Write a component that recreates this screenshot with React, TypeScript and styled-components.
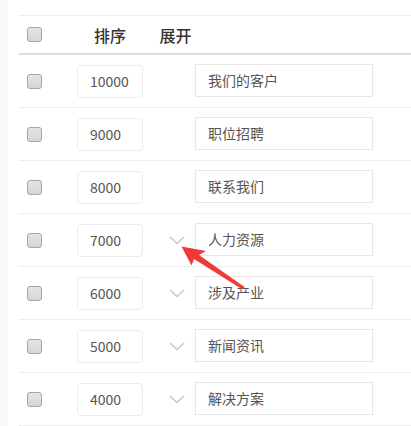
import styled, { createGlobalStyle } from 'styled-components';

const GlobalStyle = createGlobalStyle`
  html, body {
    margin: 0;
    padding: 0;
    background: #f8f8f8;
  }
  body {
    font-family: "Noto Sans CJK SC", "Noto Sans", sans-serif;
    color: #555;
  }
`;

interface Item {
  sort: number,
  name: string,
  expandable: boolean
}

const items: Array<Item> = [
  { sort: 10000, name: '我们的客户', expandable: false },
  { sort: 9000, name: '职位招聘', expandable: false },
  { sort: 8000, name: '联系我们', expandable: false },
  { sort: 7000, name: '人力资源', expandable: true },
  { sort: 6000, name: '涉及产业', expandable: true },
  { sort: 5000, name: '新闻资讯', expandable: true },
  { sort: 4000, name: '解决方案', expandable: true },
];

function Chevron() {
  return (
    <ChevronSvg width='16' height='9' viewBox='0 0 16 9'>
      <polyline points='1,1 8,7.5 15,1' fill='none' stroke='#c8c8c8' strokeWidth='1.6' />
    </ChevronSvg>
  );
}

function RedArrow() {
  return (
    <ArrowSvg width='411' height='426' viewBox='0 0 411 426'>
      <polygon
        points='181.5,246.5 206,251 199,255 244.5,287 242.5,289.5 194,259 191.5,265.5'
        fill='#f03a3a'
      />
    </ArrowSvg>
  );
}

export default function App() {
  return (
    <>
      <GlobalStyle />
      <Page>
        <Table>
          <HeaderRow>
            <CheckCell><Check /></CheckCell>
            <HeadTitle>排序</HeadTitle>
            <HeadTitle $shift={13}>展开</HeadTitle>
            <div />
          </HeaderRow>
          {items.map(item => (
            <Row key={item.sort}>
              <CheckCell><Check /></CheckCell>
              <SortInput>{item.sort}</SortInput>
              <ExpandCell>{item.expandable && <Chevron />}</ExpandCell>
              <NameInput>{item.name}</NameInput>
            </Row>
          ))}
        </Table>
        <RedArrow />
      </Page>
    </>
  );
}

const Page = styled.div`
  position: relative;
  margin-left: 8px;
  min-height: 426px;
  background: #fff;
  padding: 15px 0 0 11px;
  box-sizing: border-box;
  overflow: hidden;
`;

const Table = styled.div`
  display: flex;
  flex-direction: column;
  border-top: 1px solid #eeeeee;
`;

const GridRow = styled.div`
  display: grid;
  grid-template-columns: 58px 66px 52px 1fr;
  align-items: center;
`;

const HeaderRow = styled(GridRow)`
  height: 37px;
  border-bottom: 2px solid #dddddd;
`;

const Row = styled(GridRow)`
  height: 52px;
  border-bottom: 1px solid #eeeeee;
`;

const CheckCell = styled.div`
  padding-left: 8px;
  display: flex;
  align-items: center;
`;

const Check = styled.span`
  display: block;
  width: 13px;
  height: 13px;
  border: 1px solid #a6a6a6;
  border-radius: 3px;
  background: linear-gradient(#e4e4e4, #d6d6d6);
`;

const HeadTitle = styled.div<{ $shift?: number }>`
  text-align: center;
  white-space: nowrap;
  padding-left: ${p => p.$shift || 0}px;
  font-size: 16px;
  font-weight: 500;
  color: #333;
`;

const SortInput = styled.div`
  box-sizing: border-box;
  height: 33px;
  line-height: 31px;
  border: 1px solid #ececec;
  border-radius: 4px;
  padding-left: 12px;
  font-size: 14px;
  color: #555;
`;

const ExpandCell = styled.div`
  display: flex;
  justify-content: flex-end;
  padding-right: 10px;
`;

const ChevronSvg = styled.svg`
  display: block;
`;

const NameInput = styled.div`
  box-sizing: border-box;
  width: 178px;
  height: 33px;
  line-height: 31px;
  margin-bottom: 2px;
  border: 1px solid #e6e6e6;
  padding-left: 12px;
  font-size: 14px;
  color: #555;
`;

const ArrowSvg = styled.svg`
  position: absolute;
  left: -8px;
  top: 0;
  pointer-events: none;
`;
